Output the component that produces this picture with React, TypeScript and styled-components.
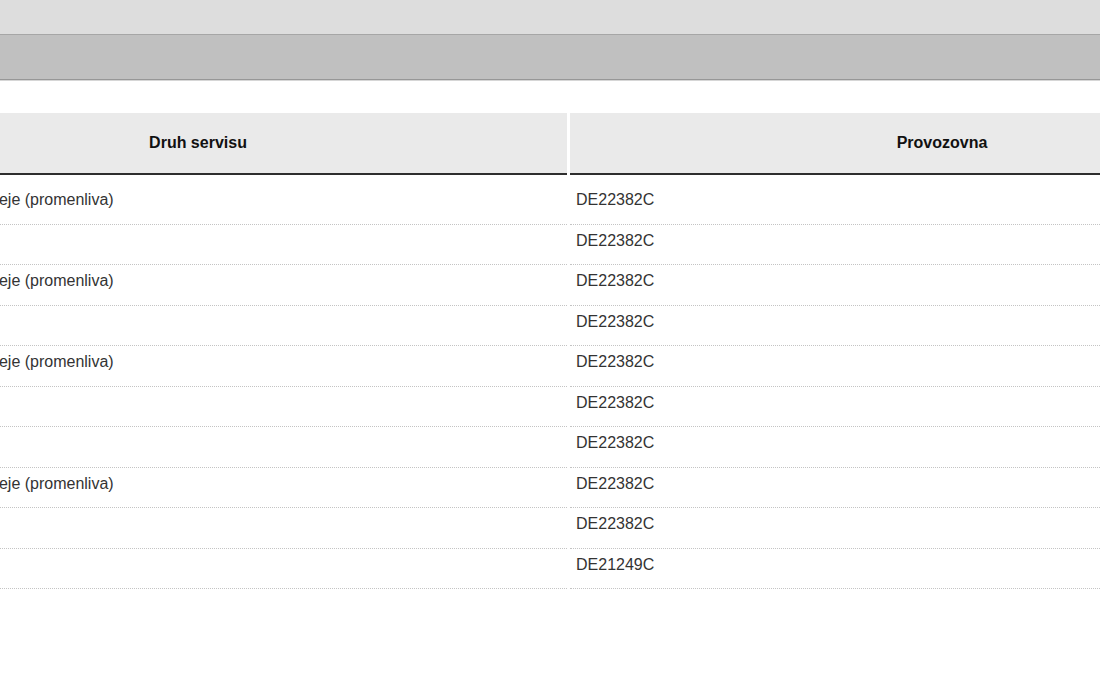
import React from "react";
import styled, { createGlobalStyle } from "styled-components";

const GlobalStyle = createGlobalStyle`
  html, body {
    margin: 0;
    padding: 0;
    background: #ffffff;
    font-family: "Liberation Sans", Arial, sans-serif;
  }
`;

const Page = styled.div`
  width: 1100px;
  height: 674px;
  overflow: hidden;
  background: #ffffff;
`;

const TopBar = styled.div`
  height: 34px;
  background: #dddddd;
  border-bottom: 1px solid #a6a6a6;
`;

const SubBar = styled.div`
  height: 44px;
  background: #c0c0c0;
  border-bottom: 1px solid #979797;
  box-shadow: 0 1px 0 #d6d6d6;
`;

const Content = styled.div`
  padding-top: 33px;
`;

const Viewport = styled.div`
  overflow: hidden;
  width: 100%;
`;

const Grid = styled.div`
  display: grid;
  grid-template-columns: 738px 744px;
  column-gap: 3px;
  margin-left: -171px;
  width: 1485px;
`;

const HeadCell = styled.div`
  height: 60px;
  background: #eaeaea;
  border-bottom: 2px solid #2e2e2e;
  display: flex;
  align-items: center;
  justify-content: center;
  font-size: 16px;
  font-weight: bold;
  color: #111111;
`;

const Spacer = styled.div`
  grid-column: 1 / -1;
  height: 9px;
`;

const Cell = styled.div`
  box-sizing: border-box;
  height: 40.56px;
  padding: 7px 0 0 6px;
  border-bottom: 1px dotted #c4c4c4;
  font-size: 16px;
  line-height: 18px;
  color: #333333;
  white-space: nowrap;
  overflow: hidden;
`;

const rows: { service: string; site: string }[] = [
  { service: "Vymena motoroveho oleje (promenliva)", site: "DE22382C" },
  { service: "Servis", site: "DE22382C" },
  { service: "Vymena motoroveho oleje (promenliva)", site: "DE22382C" },
  { service: "Servis", site: "DE22382C" },
  { service: "Vymena motoroveho oleje (promenliva)", site: "DE22382C" },
  { service: "Servis", site: "DE22382C" },
  { service: "Servis", site: "DE22382C" },
  { service: "Vymena motoroveho oleje (promenliva)", site: "DE22382C" },
  { service: "Servis", site: "DE22382C" },
  { service: "Servis", site: "DE21249C" },
];

export default function App() {
  return (
    <>
      <GlobalStyle />
      <Page>
        <TopBar />
        <SubBar />
        <Content>
          <Viewport>
            <Grid>
              <HeadCell>Druh servisu</HeadCell>
              <HeadCell>Provozovna</HeadCell>
              <Spacer />
              {rows.map((r, i) => (
                <React.Fragment key={i}>
                  <Cell>{r.service}</Cell>
                  <Cell>{r.site}</Cell>
                </React.Fragment>
              ))}
            </Grid>
          </Viewport>
        </Content>
      </Page>
    </>
  );
}
